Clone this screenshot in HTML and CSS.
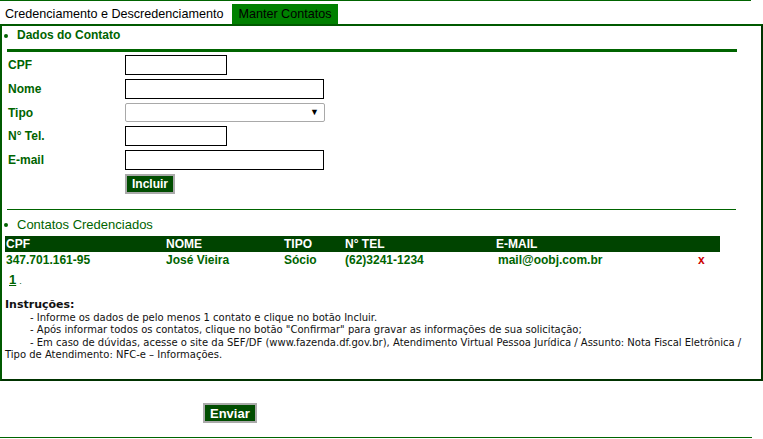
FILE: index.html
```html
<!DOCTYPE html>
<html lang="pt-BR">
<head>
<meta charset="utf-8">
<title>Manter Contatos</title>
<link rel="stylesheet" href="styles.css">
</head>
<body>
<div class="page">
  <div class="rule-top"></div>
  <div class="tabs">
    <span class="tab">Credenciamento e Descredenciamento</span>
    <span class="tab tab-active">Manter Contatos</span>
  </div>
  <div class="box">
    <div class="section-title bold">Dados do Contato</div>
    <div class="thick-line"></div>
    <div class="form">
      <label class="lbl">CPF</label>
      <div class="field"><input class="inp inp-short" type="text"></div>
      <label class="lbl">Nome</label>
      <div class="field"><input class="inp inp-long" type="text"></div>
      <label class="lbl">Tipo</label>
      <div class="field sel-field"><div class="select"><span class="arrow">&#9660;</span></div></div>
      <label class="lbl">N&deg; Tel.</label>
      <div class="field"><input class="inp inp-short" type="text"></div>
      <label class="lbl">E-mail</label>
      <div class="field"><input class="inp inp-long" type="text"></div>
      <span></span>
      <div class="field"><button class="btn" type="button">Incluir</button></div>
    </div>
    <div class="thin-line"></div>
    <div class="section-title">Contatos Credenciados</div>
    <table class="grid">
      <thead>
        <tr><th class="c1">CPF</th><th class="c2">NOME</th><th class="c3">TIPO</th><th class="c4">N&deg; TEL</th><th class="c5">E-MAIL</th><th class="c6"></th></tr>
      </thead>
      <tbody>
        <tr><td>347.701.161-95</td><td>José Vieira</td><td>Sócio</td><td>(62)3241-1234</td><td class="mail">mail@oobj.com.br</td><td class="del">x</td></tr>
      </tbody>
    </table>
    <div class="pager"><a class="page-link">1</a><span class="dot">.</span></div>
    <div class="instr">
      <div class="instr-title">Instruções:</div>
      <div class="instr-line">- Informe os dados de pelo menos 1 contato e clique no botão Incluir.</div>
      <div class="instr-line">- Após informar todos os contatos, clique no botão "Confirmar" para gravar as informações de sua solicitação;</div>
      <div class="instr-line">- Em caso de dúvidas, acesse o site da SEF/DF (www.fazenda.df.gov.br), Atendimento Virtual Pessoa Jurídica / Assunto: Nota Fiscal Eletrônica / Tipo de Atendimento: NFC-e – Informações.</div>
    </div>
  </div>
  <div class="actions"><button class="btn btn-send" type="button">Enviar</button></div>
  <div class="rule-bottom"></div>
</div>
</body>
</html>
```
FILE: styles.css
```css
html, body { margin: 0; padding: 0; background: #fff; }
body { font-family: "Liberation Sans", Arial, sans-serif; font-size: 12px; }
.page { width: 763px; }
.rule-top { height: 1px; width: 751px; background: #006400; }
.tabs { display: flex; margin-top: 3px; height: 20px; font-size: 12.6px; line-height: 21px; white-space: nowrap; }
.tab { padding: 0 9px 0 5px; color: #000; }
.tab-active { background: #008000; color: #000; padding: 0 6px; }
.box { border: 2px solid #004d00; border-color: #005a00 #003300 #003300 #005a00; height: 353px; box-sizing: content-box; }
.section-title { position: relative; padding-left: 15px; height: 19px; line-height: 19px; color: #006400; font-size: 13px; }
.section-title.bold { font-weight: bold; font-size: 12px; margin-top: 0; }
.section-title::before { content: ""; position: absolute; left: 2px; top: 8px; width: 4px; height: 4px; border-radius: 50%; background: #006400; }
.thick-line { height: 3px; margin: 4px 24px 0 5px; background: #006400; }
.form { display: grid; grid-template-columns: 117px auto; margin: 3px 0 0 6px; row-gap: 4px; align-items: center; }
.lbl { font-weight: bold; color: #006400; font-size: 12px; }
.field { height: 20px; display: flex; align-items: center; }
.inp { box-sizing: border-box; height: 20px; border: 1px solid #000; margin: 0; padding: 0; }
.inp-short { width: 102px; }
.inp-long { width: 199px; }
.sel-field { height: 19px; }
.select { box-sizing: border-box; width: 200px; height: 19px; border: 1px solid #a9a9a9; border-radius: 2px; position: relative; }
.arrow { position: absolute; right: 5px; top: 2px; font-size: 9px; color: #000; line-height: 12px; }
.btn { box-sizing: border-box; height: 20px; background: #004d00; color: #fff; font-weight: bold; font-size: 12px; font-family: "Liberation Sans", Arial, sans-serif; border: 2px solid #aaa; padding: 0 5px; margin: 0; }
.thin-line { height: 1px; background: #006400; margin: 15px 25px 0 5px; }
.section-title:not(.bold) { margin-top: 5px; }
.grid { border-collapse: collapse; margin: 2px 0 0 3px; width: 715px; table-layout: fixed; }
.grid th { background: #004400; color: #fff; font-weight: bold; text-align: left; height: 16px; padding: 0 1px; font-size: 12px; }
.grid td { color: #006400; font-weight: bold; height: 16px; padding: 0 1px; font-size: 12px; }
.c1 { width: 158px; } .c2 { width: 116px; } .c3 { width: 59px; } .c4 { width: 149px; } .c5 { width: 195px; } .c6 { width: 26px; }
.grid td.mail { padding-left: 3px; }
.grid td.del { color: #cc0000; text-align: left; padding-left: 6px; }
.pager { margin: 4px 0 0 7px; height: 15px; font-weight: bold; color: #006400; font-size: 13px; }
.page-link { text-decoration: underline; color: #006400; }
.dot { font-size: 9px; font-weight: normal; margin-left: 3px; }
.instr { margin-top: 12px; padding-left: 3px; font-family: "DejaVu Sans", Verdana, sans-serif; font-size: 10px; line-height: 12.5px; color: #111; }
.instr-line { text-indent: 25px; }
.instr-title { font-weight: bold; font-size: 11px; }
.actions { margin: 22px 0 0 203px; height: 20px; }
.btn-send { font-size: 13px; padding: 0 5px; }
.rule-bottom { height: 1px; width: 752px; background: #006400; margin-top: 14px; }
```
